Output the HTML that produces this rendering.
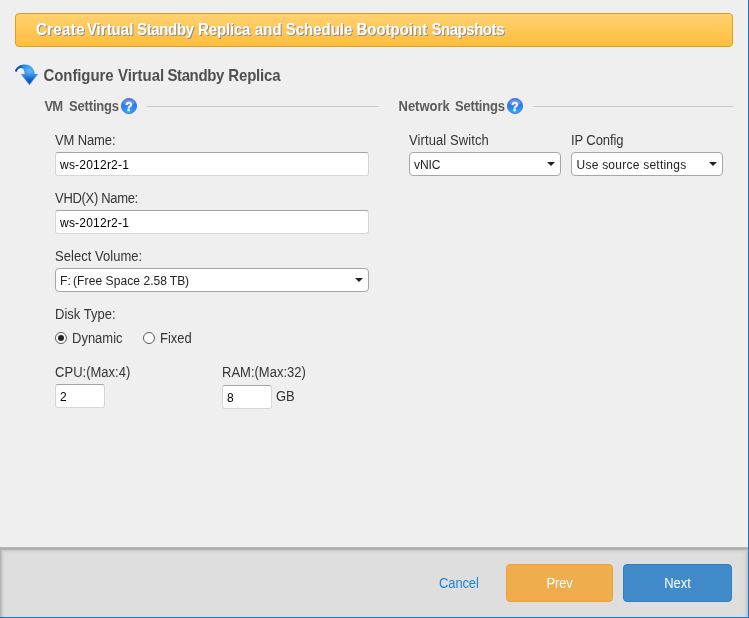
<!DOCTYPE html>
<html>
<head>
<meta charset="utf-8">
<title>Create Virtual Standby Replica</title>
<style>
html,body{margin:0;padding:0;}
body{width:749px;height:618px;overflow:hidden;background:#efefef;font-family:"Liberation Sans",sans-serif;position:relative;color:#444;}
.abs{position:absolute;white-space:nowrap;}
#win{position:absolute;left:0;top:0;width:748px;height:617px;overflow:hidden;background:#efefef;}
#edgeR{position:absolute;left:748px;top:0;width:1px;height:618px;background:#1478d6;}
#edgeB{position:absolute;left:0;top:617px;width:749px;height:1px;background:#1478d6;}

#banner{position:absolute;left:15px;top:13px;width:716px;height:32px;border:1px solid #d9a117;border-radius:4px;
  background:linear-gradient(#ffd171,#ffbe3d);}
#banner span{position:absolute;top:0;line-height:32px;font-size:15px;font-weight:bold;color:#fff;
  text-shadow:1px 1px 0.5px #8d878f;white-space:nowrap;transform:scaleY(1.07);transform-origin:0 21.2px;}

#h2{left:44px;top:67px;width:250px;height:18px;font-size:15px;line-height:18px;font-weight:bold;color:#505050;}
#h2 span{position:absolute;top:0;white-space:nowrap;transform:scaleY(1.07);transform-origin:0 14.2px;}
.leg{font-size:13px;line-height:16px;font-weight:bold;color:#5c5c5c;transform:scaleY(1.075);transform-origin:0 0;}
.hr{position:absolute;height:1px;background:#c9c9c9;top:106px;}
.lbl{font-size:13px;line-height:16px;color:#353535;transform:scaleY(1.075);transform-origin:0 0;}
.inp{position:absolute;box-sizing:border-box;height:24px;background:#fff;border:1px solid #d6d6d6;border-top-color:#a3a3a3;border-radius:3px;}
.inp span{position:absolute;left:4px;top:1px;line-height:22px;font-size:12px;color:#000;white-space:nowrap;}
.sel{position:absolute;box-sizing:border-box;height:24px;background:#fff;border:1px solid #a6a6a6;border-radius:4px;}
.sel span{position:absolute;left:4px;top:1px;line-height:22px;font-size:12px;color:#222;white-space:nowrap;}
.sel i{position:absolute;right:5px;top:9px;width:0;height:0;border-left:4px solid transparent;border-right:4px solid transparent;border-top:4px solid #222;}
.radio{position:absolute;box-sizing:border-box;width:12px;height:12px;border:1px solid #5a5a5a;border-radius:50%;background:#fff;}
.radio b{position:absolute;left:2px;top:2px;width:6px;height:6px;border-radius:50%;background:#222;}

#footer{position:absolute;left:0;top:547px;width:748px;height:70px;background:#dedede;overflow:hidden;}
#footer .l{mix-blend-mode:darken;position:absolute;left:0;top:0;width:6px;height:70px;background:linear-gradient(90deg,#b2b2b2 0,#b2b2b2 1px,#c3c3c3 1px,#c3c3c3 2px,#cfcfcf 2px,#cfcfcf 3px,#d7d7d7 3px,#d7d7d7 4px,#dbdbdb 4px,#dbdbdb 5px,#dddddd 5px);}
#footer .r{mix-blend-mode:darken;position:absolute;left:742px;top:0;width:6px;height:70px;background:linear-gradient(270deg,#c6c6c6 0,#c6c6c6 1px,#cbcbcb 1px,#cbcbcb 2px,#d3d3d3 2px,#d3d3d3 3px,#d9d9d9 3px,#d9d9d9 4px,#dcdcdc 4px,#dcdcdc 5px,#dddddd 5px);}
#footer .t{position:absolute;left:0;top:0;width:748px;height:7px;background:linear-gradient(180deg,#b8b8b8 0,#b8b8b8 1px,#a9a9a9 1px,#a9a9a9 2px,#b5b5b5 2px,#b5b5b5 3px,#c8c8c8 3px,#c8c8c8 4px,#d4d4d4 4px,#d4d4d4 5px,#dadada 5px,#dadada 6px,#dddddd 6px);}
.btn{position:absolute;top:564px;height:38px;box-sizing:border-box;border-radius:4px;color:#fff;font-size:13px;line-height:36px;text-align:center;}
.btn span{display:block;transform:scaleY(1.075);transform-origin:50% 12.8px;}
#prev{left:506px;width:107px;background:#f0ad4e;border:1px solid #eea236;}
#next{left:623px;width:109px;background:#428bca;border:1px solid #357ebd;}
#cancel{left:439px;top:574px;font-size:13px;line-height:18px;color:#1c86d6;letter-spacing:-0.12px;transform:scaleY(1.075);transform-origin:0 0;}
</style>
</head>
<body>
<div id="win">
  <div id="banner"><span style="left:19.9px;letter-spacing:0.38px">Create</span> <span style="left:70.9px;letter-spacing:0.0px">Virtual</span> <span style="left:121.1px;letter-spacing:-0.37px">Standby</span> <span style="left:182.1px;letter-spacing:-0.17px">Replica</span> <span style="left:238.8px;letter-spacing:0.05px">and</span> <span style="left:269.7px;letter-spacing:0.0px">Schedule</span> <span style="left:340.4px;letter-spacing:0.0px">Bootpoint</span> <span style="left:415.4px;letter-spacing:-0.45px">Snapshots</span></div>

  <svg class="abs" style="left:14px;top:63px" width="26" height="24" viewBox="14 63 26 24">
    <defs>
      <linearGradient id="ag" x1="0" y1="0" x2="0" y2="1">
        <stop offset="0" stop-color="#1a93fc"/>
        <stop offset="0.3" stop-color="#3f9ff2"/>
        <stop offset="0.5" stop-color="#3a8fe6"/>
        <stop offset="0.8" stop-color="#0d57c4"/>
        <stop offset="1" stop-color="#0640b0"/>
      </linearGradient>
      <linearGradient id="tg" x1="0" y1="0" x2="1" y2="0">
        <stop offset="0" stop-color="#0830a8"/>
        <stop offset="0.55" stop-color="#0d4cc4" stop-opacity="0.85"/>
        <stop offset="1" stop-color="#1a93fc" stop-opacity="0"/>
      </linearGradient>
      <radialGradient id="hl" cx="29.5" cy="70.5" r="5.5" gradientUnits="userSpaceOnUse">
        <stop offset="0" stop-color="#6cb6f6" stop-opacity="0.85"/>
        <stop offset="1" stop-color="#6cb6f6" stop-opacity="0"/>
      </radialGradient>
    </defs>
    <path d="M15 70.8 C17 66.4 21 64.4 24.8 64.4 C30.6 64.4 34.4 68.4 34.7 74.1 L38 74.1 L29.4 85 L21 74.1 L24.7 74.1 C24.6 70.8 23.3 68.3 20.9 68.1 C19 68 17.4 69.6 16.3 71.9 Z" fill="url(#ag)"/>
    <path d="M15 70.8 C17 66.4 21 64.4 24.8 64.4 L25.5 69.5 C24 67.8 22 68 20.9 68.1 C19 68 17.4 69.6 16.3 71.9 Z" fill="url(#tg)"/>
    <path d="M24.8 64.4 C30.6 64.4 34.4 68.4 34.7 74.1 L34 78 L25 76 L24.7 74.1 C24.6 70.8 23.3 68.3 20.9 68.1 Z" fill="url(#hl)"/>
    <path d="M21.4 74.5 L29.4 84.6 L37.6 74.5" fill="none" stroke="#55acf8" stroke-width="0.9" stroke-opacity="0.85" stroke-linejoin="round"/>
  </svg>
  <div class="abs" id="h2"><span style="left:-0.5px;letter-spacing:-0.09px">Configure</span> <span style="left:74.0px;letter-spacing:-0.05px">Virtual</span> <span style="left:123.4px;letter-spacing:-0.37px">Standby</span> <span style="left:184.3px;letter-spacing:-0.17px">Replica</span></div>

  <div class="abs leg" style="left:44.5px;top:98px;letter-spacing:-1px">VM</div> <div class="abs leg" style="left:69px;top:98px;letter-spacing:-0.17px">Settings</div>
  <svg width="0" height="0" style="position:absolute"><defs>
    <linearGradient id="hg" x1="0" y1="0" x2="0" y2="1">
      <stop offset="0" stop-color="#4a6ee6"/>
      <stop offset="0.45" stop-color="#2a7aee"/>
      <stop offset="1" stop-color="#22b6fc"/>
    </linearGradient></defs></svg>
  <svg class="abs" style="left:121px;top:98px" width="16" height="16" viewBox="0 0 16 16">
    <circle cx="8" cy="8" r="7.6" fill="url(#hg)" stroke="#3a63d6" stroke-width="0.8"/>
    <ellipse cx="8" cy="4.6" rx="5.6" ry="3" fill="#fff" opacity="0.22"/>
    <text x="8" y="13" text-anchor="middle" font-family="Liberation Sans" font-weight="bold" font-size="12" fill="#fff" stroke="#fff" stroke-width="0.35">?</text>
  </svg>
  <div class="hr" style="left:147px;width:232px;"></div>
  <div class="abs leg" style="left:398.5px;top:98px;">Network</div> <div class="abs leg" style="left:455.1px;top:98px;letter-spacing:-0.2px">Settings</div>
  <svg class="abs" style="left:507px;top:98px" width="16" height="16" viewBox="0 0 16 16">
    <circle cx="8" cy="8" r="7.6" fill="url(#hg)" stroke="#3a63d6" stroke-width="0.8"/>
    <ellipse cx="8" cy="4.6" rx="5.6" ry="3" fill="#fff" opacity="0.22"/>
    <text x="8" y="13" text-anchor="middle" font-family="Liberation Sans" font-weight="bold" font-size="12" fill="#fff" stroke="#fff" stroke-width="0.35">?</text>
  </svg>
  <div class="hr" style="left:533px;width:200px;"></div>

  <div class="abs lbl" style="left:55.1px;top:132px;letter-spacing:-0.14px">VM Name:</div>
  <div class="inp" style="left:55px;top:152px;width:314px;"><span style="letter-spacing:0.22px">ws-2012r2-1</span></div>
  <div class="abs lbl" style="left:55.1px;top:190px;letter-spacing:-0.33px">VHD(X) Name:</div>
  <div class="inp" style="left:55px;top:210px;width:314px;"><span style="letter-spacing:0.22px">ws-2012r2-1</span></div>
  <div class="abs lbl" style="left:55.1px;top:248px;letter-spacing:0.03px">Select Volume:</div>
  <div class="sel" style="left:55px;top:268px;width:314px;"><span style="letter-spacing:0.1px">F:<b style="font-weight:normal;margin-left:-1.3px"> </b>(Free Space <em style="font-style:normal;letter-spacing:-0.04px">2.58 TB)</em></span><i></i></div>
  <div class="abs lbl" style="left:55.1px;top:306px;">Disk Type:</div>
  <div class="radio" style="left:55px;top:332px;"><b></b></div>
  <div class="abs lbl" style="left:72px;top:330px;">Dynamic</div>
  <div class="radio" style="left:143px;top:332px;"></div>
  <div class="abs lbl" style="left:160px;top:330px;">Fixed</div>
  <div class="abs lbl" style="left:55.1px;top:364px;letter-spacing:0px">CPU:(Max:4)</div>
  <div class="inp" style="left:55px;top:384px;width:50px;"><span>2</span></div>
  <div class="abs lbl" style="left:222px;top:364px;">RAM:(Max:32)</div>
  <div class="inp" style="left:222px;top:385px;width:50px;"><span>8</span></div>
  <div class="abs lbl" style="left:276px;top:388px;">GB</div>

  <div class="abs lbl" style="left:409px;top:132px;letter-spacing:0.1px">Virtual Switch</div>
  <div class="sel" style="left:409px;top:152px;width:152px;"><span style="letter-spacing:-0.1px">vNIC</span><i></i></div>
  <div class="abs lbl" style="left:571px;top:132px;letter-spacing:-0.1px">IP Config</div>
  <div class="sel" style="left:571px;top:152px;width:152px;"><span style="letter-spacing:0.24px;left:4.5px">Use source settings</span><i></i></div>

  <div id="footer"><div class="t"></div><div class="l"></div><div class="r"></div></div>
  <div class="abs" id="cancel">Cancel</div>
  <div class="btn" id="prev"><span style="letter-spacing:-0.2px">Prev</span></div>
  <div class="btn" id="next"><span>Next</span></div>
</div>
<div id="edgeR"></div>
<div id="edgeB"></div>
</body>
</html>
